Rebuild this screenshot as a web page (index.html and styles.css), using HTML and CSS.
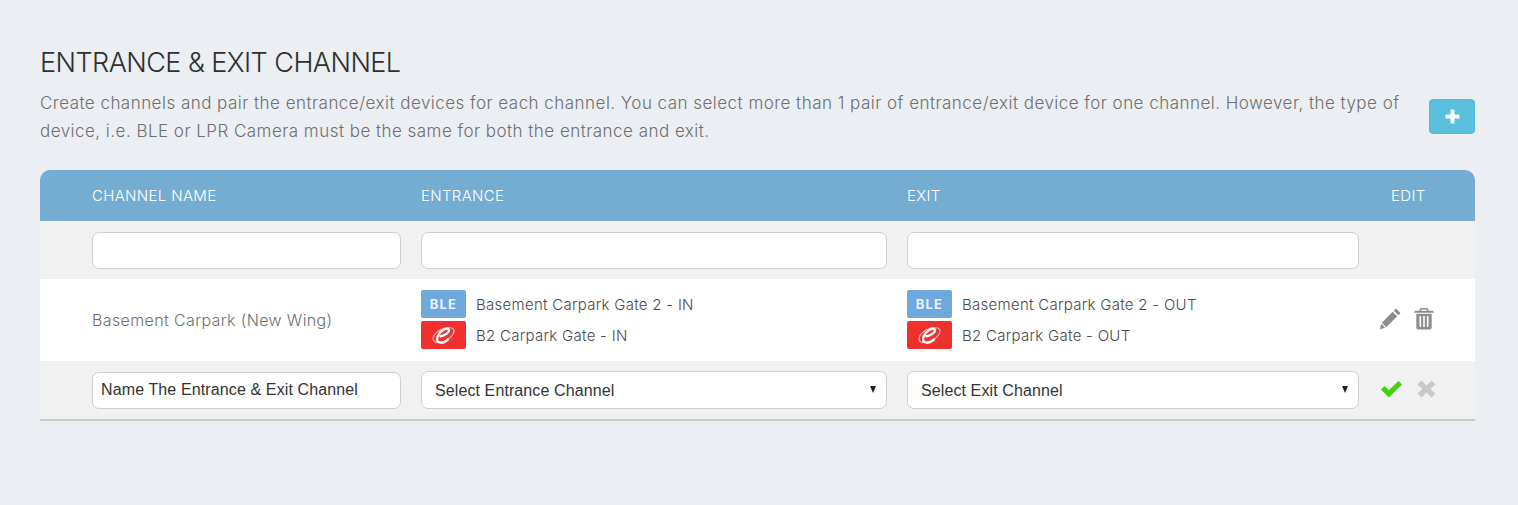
FILE: index.html
```html
<!DOCTYPE html>
<html lang="en">
<head>
<meta charset="utf-8">
<title>Entrance &amp; Exit Channel</title>
<link rel="stylesheet" href="styles.css">
</head>
<body>
<main class="page">
  <h1 class="title">ENTRANCE &amp; EXIT CHANNEL</h1>
  <div class="intro">
    <p class="desc">Create channels and pair the entrance/exit devices for each channel. You can select more than 1 pair of entrance/exit device for one channel. However, the type of device, i.e. BLE or LPR Camera must be the same for both the entrance and exit.</p>
    <button class="add" type="button" aria-label="Add">
      <svg width="15" height="15" viewBox="0 0 15 15"><path d="M5.6 0.5h3.8v5.1h5.1v3.8H9.400v5.100H5.600V9.400H0.500V5.600h5.100z" fill="#fff"/></svg>
    </button>
  </div>
  <section class="table">
    <div class="row head">
      <div>CHANNEL NAME</div><div>ENTRANCE</div><div>EXIT</div><div class="edit-h">EDIT</div>
    </div>
    <div class="row filter">
      <input class="field" type="text"><input class="field" type="text"><input class="field" type="text"><div></div>
    </div>
    <div class="row data">
      <div class="name">Basement Carpark (New Wing)</div>
      <div class="devices">
        <div class="device"><span class="badge ble">BLE</span><span class="device-name">Basement Carpark Gate 2 - IN</span></div>
        <div class="device"><span class="badge lpr"><svg width="45" height="28" viewBox="0 0 45 28"><ellipse cx="22.500" cy="14" rx="11.500" ry="6" transform="rotate(-28 22.500 14)" fill="none" stroke="#f8b8b8" stroke-width="1.100"/><path d="M18.500 15.500c4.500-.5 10-4 9.500-6.800-.8-2.400-6-1-9.300 3.300-3.500 4.500-3.500 8.500-.3 9.500 2.800.7 6.500-1 9.300-3.700" fill="none" stroke="#fff" stroke-width="2.300"/></svg></span><span class="device-name">B2 Carpark Gate - IN</span></div>
      </div>
      <div class="devices">
        <div class="device"><span class="badge ble">BLE</span><span class="device-name">Basement Carpark Gate 2 - OUT</span></div>
        <div class="device"><span class="badge lpr"><svg width="45" height="28" viewBox="0 0 45 28"><ellipse cx="22.500" cy="14" rx="11.500" ry="6" transform="rotate(-28 22.500 14)" fill="none" stroke="#f8b8b8" stroke-width="1.100"/><path d="M18.500 15.500c4.500-.5 10-4 9.500-6.800-.8-2.400-6-1-9.300 3.300-3.500 4.500-3.500 8.500-.3 9.500 2.800.7 6.500-1 9.300-3.700" fill="none" stroke="#fff" stroke-width="2.300"/></svg></span><span class="device-name">B2 Carpark Gate - OUT</span></div>
      </div>
      <div class="actions">
        <svg width="23" height="23" viewBox="0 0 23 23"><path d="M17 1.500l4.500 4.500-2.200 2.200-4.500-4.500zM13.700 4.800l4.500 4.500L7.300 20.200l-4.500-4.500zM2.200 16.800l4 4L.8 22.300z" fill="#8e8e8e"/></svg>
        <svg class="trash" width="20" height="23" viewBox="0 0 20 23"><path fill-rule="evenodd" d="M6.500 1h7l1.300 2.700H19.500v2H.5v-2h4.700zM7.600 2.600l-.6 1.100h6l-.6-1.100zM2.300 6.700h15.400v13.800c0 1.100-.9 2-2 2H4.300c-1.100 0-2-.9-2-2zM5.500 9v11h1.600V9zM9.200 9v11h1.600V9zM12.900 9v11h1.600V9z" fill="#8e8e8e"/></svg>
      </div>
    </div>
    <div class="row adding">
      <input class="field name-input" type="text" value="Name The Entrance &amp; Exit Channel">
      <label class="select-wrap"><select class="field sel"><option>Select Entrance Channel</option></select></label>
      <label class="select-wrap"><select class="field sel"><option>Select Exit Channel</option></select></label>
      <div class="actions confirm">
        <svg width="23" height="18" viewBox="0 0 23 18"><path d="M1 9.500l3.500-3.500 4.300 4.300L18.500 1 22 4.500 8.800 17.500z" fill="#3fd20a"/></svg>
        <svg class="cross" width="19" height="18" viewBox="0 0 19 18"><path d="M4.500.5l5 5 5-5 4 4-5 4.500 5 4.500-4 4-5-5-5 5-4-4 5-4.500-5-4.500z" fill="#c8c8c8"/></svg>
      </div>
    </div>
  </section>
</main>
</body>
</html>
```
FILE: styles.css
```css
* { box-sizing: border-box; }
html, body { margin: 0; height: 100%; }
body {
  background: #ebeef3;
  font-family: Inter, "Liberation Sans", sans-serif;
  font-weight: 300;
  overflow: hidden;
}
.page { padding: 45px 43px 0 40px; }
.title {
  margin: 0;
  font-size: 27px;
  line-height: 36px;
  font-weight: 300;
  color: #2f2f2f;
  letter-spacing: -0.55px;
}
.intro {
  display: flex;
  align-items: center;
  justify-content: space-between;
  margin-top: 7px;
}
.desc {
  margin: 0 0 -1px;
  padding-top: 1px;
  width: 1365px;
  font-size: 17px;
  line-height: 28px;
  color: #6f6f6f;
  letter-spacing: 0.47px;
}
.add {
  width: 46px;
  height: 35px;
  padding: 0;
  border: 1px solid #51b9d9;
  border-radius: 4px;
  background: #5bc0de;
  display: flex;
  align-items: center;
  justify-content: center;
}
.table { margin-top: 26px; border-bottom: 2px solid #c9c9c9; }
.row {
  display: grid;
  grid-template-columns: 309px 466px 452px 1fr;
  column-gap: 20px;
  padding-left: 52px;
  align-items: center;
}
.head {
  height: 51px;
  background: #75acd1;
  color: #fff;
  font-size: 15px;
  letter-spacing: 0.33px;
  border-radius: 10px 10px 0 0;
}
.edit-h { padding-left: 12px; }
.filter { height: 58px; background: #f1f1f1; }
.field {
  height: 37px;
  width: 100%;
  border: 1px solid #cfcfcf;
  border-radius: 7px;
  background: #fff;
  padding: 0 8px;
  font-family: "Liberation Sans", Arial, sans-serif;
  font-size: 16px;
  color: #333;
}
.data { height: 82px; background: #fff; }
.name { color: #6f6f6f; font-size: 16px; letter-spacing: 0.37px; }
.devices { display: flex; flex-direction: column; gap: 3px; margin-top: -2px; }
.device {
  display: flex;
  align-items: center;
  gap: 10px;
  height: 28px;
  font-size: 15px;
  letter-spacing: 0.28px;
  color: #4a4a4a;
}
.device-name { padding-top: 2px; }
.badge {
  width: 45px;
  height: 28px;
  border-radius: 2px;
  display: flex;
  align-items: center;
  justify-content: center;
  font-size: 13px;
  font-weight: 700;
  letter-spacing: 1.2px;
  color: #e8f1fa;
}
.ble { background: #6fa8dc; }
.lpr { background: #f0302c; }
.actions { display: flex; align-items: center; gap: 12px; margin-top: -4px; }
.adding { height: 58px; background: #f1f1f1; }
.name-input { letter-spacing: 0.12px; }
.select-wrap { position: relative; display: block; }
.select-wrap::after {
  content: "";
  position: absolute;
  right: 11px;
  top: 15px;
  border-left: 3.500px solid transparent;
  border-right: 3.500px solid transparent;
  border-top: 7px solid #222;
  pointer-events: none;
}
.sel {
  display: block;
  height: 38px;
  padding-left: 13px;
  appearance: none;
  letter-spacing: 0.1px;
}
.confirm { gap: 14px; padding-left: 1px; margin-top: -2px; }
```
